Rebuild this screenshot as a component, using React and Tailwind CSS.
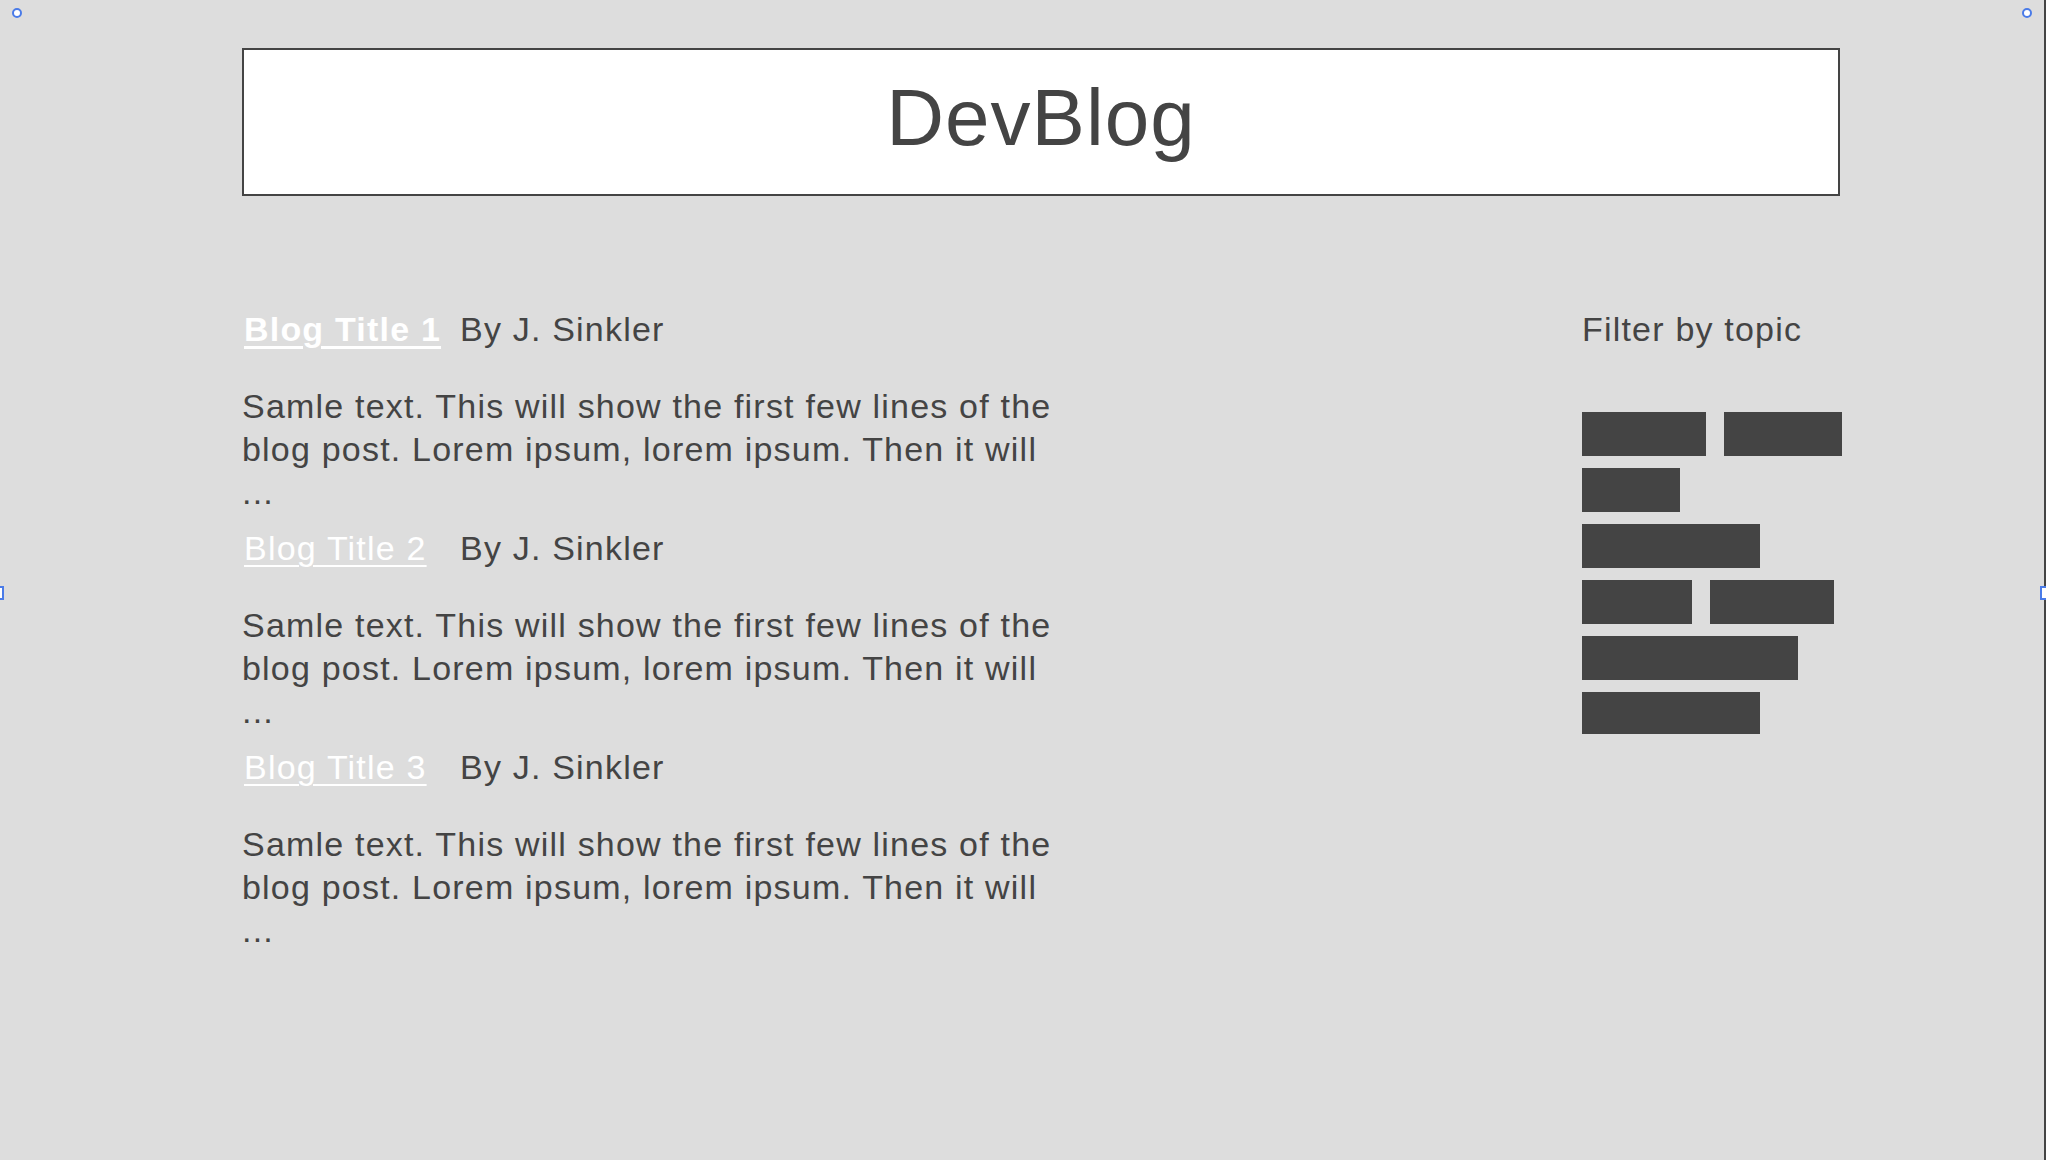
import React from 'react';

const posts = [
  { id: 1, title: 'Blog Title 1', author: 'J. Sinkler', bold: true },
  { id: 2, title: 'Blog Title 2', author: 'J. Sinkler' },
  { id: 3, title: 'Blog Title 3', author: 'J. Sinkler' },
];

const excerpt =
  'Samle text. This will show the first few lines of the blog post. Lorem ipsum, lorem ipsum. Then it will ...';

// widths of the topic chips, row by row
const topics = [
  [124, 118],
  [98],
  [178],
  [110, 124],
  [216],
  [178],
];

const PostItem = ({ post }) => (
  <div className="mb-[13px]">
    <div className="flex items-baseline h-[43px] mb-[34px]">
      <a
        href="#"
        className={`w-[218px] pl-[2px] shrink-0 text-white underline underline-offset-[5px] ${
          post.bold ? 'font-bold decoration-[3px]' : 'font-normal decoration-2'
        }`}
      >
        {post.title}
      </a>
      <span>By {post.author}</span>
    </div>
    <p className="w-[818px]">{excerpt}</p>
  </div>
);

const App = () => {
  return (
    <div
      className="relative min-h-[1160px] w-full bg-[#dddddd] text-[#444444] text-[34px] leading-[43px] tracking-[1.2px] overflow-hidden"
      style={{ fontFamily: '"Liberation Sans", Arial, sans-serif' }}
    >
      <div className="pt-[48px] pl-[242px]">
        <header className="w-[1598px] h-[148px] border-2 border-[#444444] bg-white flex justify-center pt-[28px]">
          <h1 className="text-[80px] leading-none tracking-[1px] font-normal">DevBlog</h1>
        </header>

        <main className="flex mt-[112px]">
          <section className="w-[825px]">
            {posts.map((post) => (
              <PostItem key={post.id} post={post} />
            ))}
          </section>

          <aside className="ml-[515px] w-[262px]">
            <h2 className="h-[43px] font-normal">Filter by topic</h2>
            <div className="mt-[61px] flex flex-col gap-y-[12px]">
              {topics.map((row, i) => (
                <div key={i} className="flex gap-x-[18px]">
                  {row.map((w, j) => (
                    <button
                      key={j}
                      className={`bg-[#444444] ${i === topics.length - 1 ? 'h-[42px]' : 'h-[44px]'}`}
                      style={{ width: w }}
                    />
                  ))}
                </div>
              ))}
            </div>
          </aside>
        </main>
      </div>

      {/* frame edge + selection handles */}
      <div className="absolute top-0 right-0 h-full w-[2px] bg-[#444444]" />
      <div className="absolute top-[8px] left-[12px] w-[10px] h-[10px] rounded-full border-2 border-[#4a7be8] bg-white" />
      <div className="absolute top-[8px] left-[2022px] w-[10px] h-[10px] rounded-full border-2 border-[#4a7be8] bg-white" />
      <div className="absolute top-[586px] left-[-8px] w-[12px] h-[14px] border-2 border-[#4a7be8] bg-white" />
      <div className="absolute top-[586px] left-[2040px] w-[12px] h-[14px] border-2 border-[#4a7be8] bg-white" />
    </div>
  );
};

export default App;
